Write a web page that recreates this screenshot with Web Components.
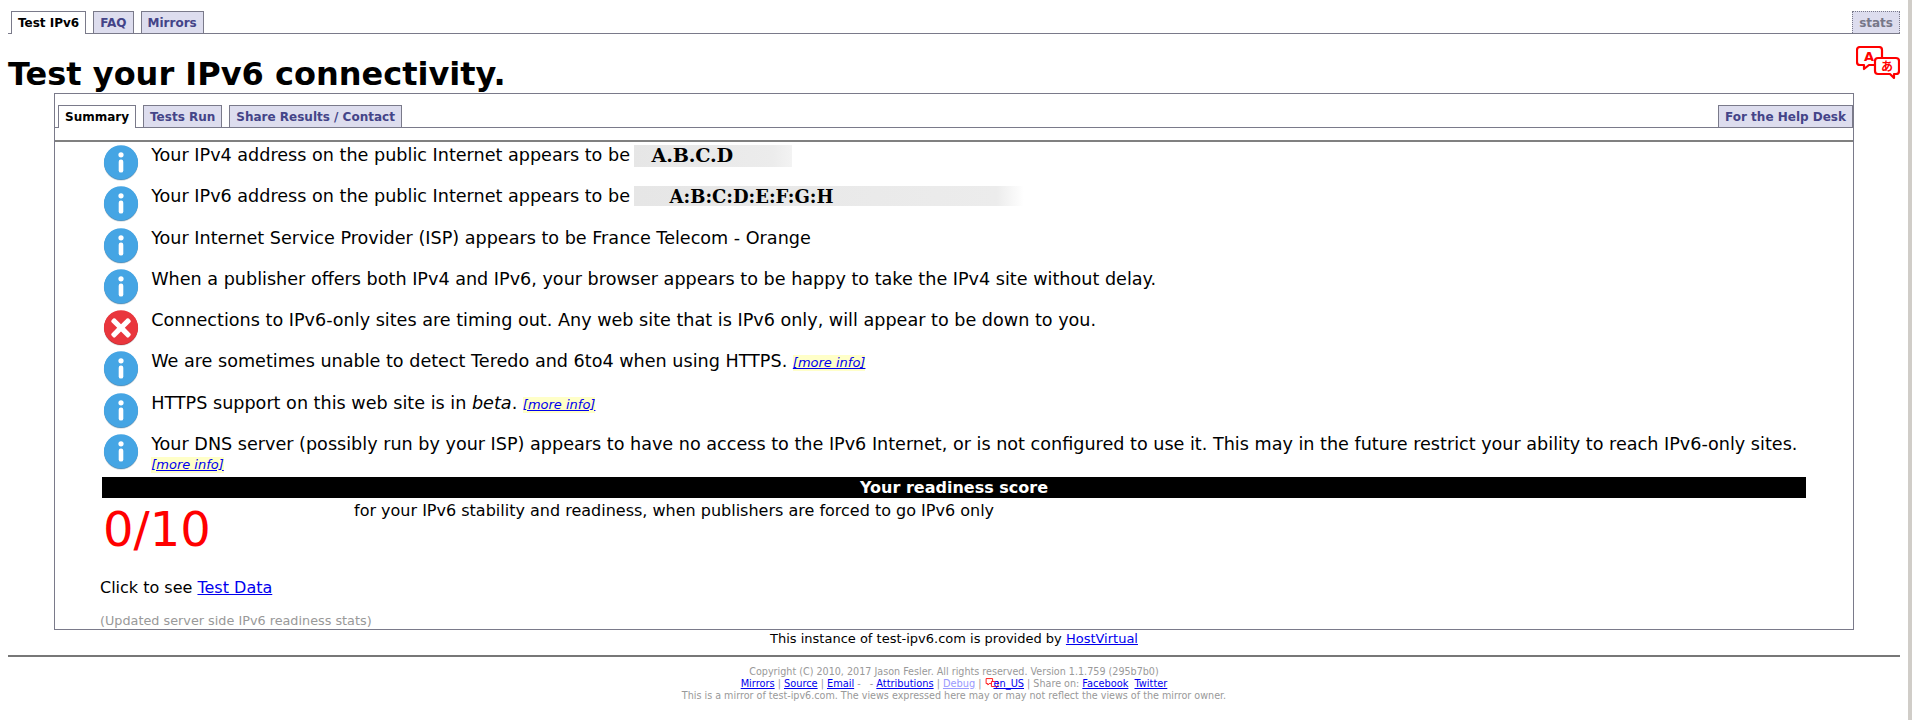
<!DOCTYPE html>
<html lang="en">
<head>
<meta charset="utf-8">
<title>Test your IPv6 connectivity.</title>
<style>
  html { overflow: hidden; }
  body {
    margin: 0;
    padding: 11px 12px 0 8px;
    font-family: "DejaVu Sans", sans-serif;
    font-size: 16px;
    color: #000;
    background: #fff;
  }
  a { color: #00e; }
</style>
</head>
<body>
<tab-bar>
  <tab-item active>Test IPv6</tab-item>
  <tab-item>FAQ</tab-item>
  <tab-item>Mirrors</tab-item>
  <tab-item slot="end" muted>stats</tab-item>
</tab-bar>

<page-title>Test your IPv6 connectivity.</page-title>

<result-panel>
  <tab-bar slot="tabs" inner>
    <tab-item active>Summary</tab-item>
    <tab-item>Tests Run</tab-item>
    <tab-item>Share Results / Contact</tab-item>
    <tab-item slot="end">For the Help Desk</tab-item>
  </tab-bar>

  <result-row>Your IPv4 address on the public Internet appears to be <masked-value width="158" indent="18" height="22" size="19.2" spacing="-.2" fade="88" end="#f3f3f3">A.B.C.D</masked-value></result-row>
  <result-row>Your IPv6 address on the public Internet appears to be <masked-value width="390" indent="36" height="20" size="18" spacing="0" fade="93" end="#fff">A:B:C:D:E:F:G:H</masked-value></result-row>
  <result-row>Your Internet Service Provider (ISP) appears to be France Telecom - Orange</result-row>
  <result-row>When a publisher offers both IPv4 and IPv6, your browser appears to be happy to take the IPv4 site without delay.</result-row>
  <result-row kind="error">Connections to IPv6-only sites are timing out. Any web site that is IPv6 only, will appear to be down to you.</result-row>
  <result-row>We are sometimes unable to detect Teredo and 6to4 when using HTTPS. <more-info></more-info></result-row>
  <result-row>HTTPS support on this web site is in <i>beta</i>. <more-info></more-info></result-row>
  <result-row>Your DNS server (possibly run by your ISP) appears to have no access to the IPv6 Internet, or is not configured to use it. This may in the future restrict your ability to reach IPv6-only sites. <br><more-info tight></more-info></result-row>

  <score-box score="0/10" label="Your readiness score">for your IPv6 stability and readiness, when publishers are forced to go IPv6 only</score-box>

  <data-links></data-links>
</result-panel>

<provider-line></provider-line>
<site-footer></site-footer>
<fake-scrollbar></fake-scrollbar>

<script>
function defineElement(name, html, extra) {
  class Base extends HTMLElement {
    constructor() {
      super();
      this.attachShadow({ mode: 'open' });
      this.shadowRoot.innerHTML = html;
    }
  }
  customElements.define(name, extra ? extra(Base) : Base);
}

const LANG_ICON = `
  <svg width="44" height="34" viewBox="0 0 44 34" fill="#fff" stroke="#f00" stroke-width="2.2" stroke-linejoin="round">
    <path d="M4 1h19q3 0 3 3v12q0 3-3 3H13l-5 4v-4H4q-3 0-3-3V4q0-3 3-3z" fill="none"/>
    <path d="M22 12h18q3 0 3 3v10q0 3-3 3h-2v4l-4-4H22q-3 0-3-3V15q0-3 3-3z"/>
    <text x="13" y="14.5" font-family="DejaVu Sans" font-size="13" font-weight="bold" fill="#f00" stroke="none" text-anchor="middle">A</text>
    <text x="31" y="25" font-family="Noto Sans CJK JP" font-size="12" font-weight="bold" fill="#f00" stroke="none" text-anchor="middle">あ</text>
  </svg>`;

defineElement('tab-bar', `
  <style>
    :host { display: flex; justify-content: space-between; align-items: flex-end; height: 22px; border-bottom: 1px solid #7a7a8a; padding-left: 3px; }
    .group { display: flex; gap: 7px; height: 22px; }
  </style>
  <div class="group"><slot></slot></div>
  <div class="group"><slot name="end"></slot></div>
`);

defineElement('tab-item', `
  <style>
    :host { display: block; box-sizing: border-box; height: 22px; padding: 4px 6px 0; font: bold 12px "DejaVu Sans", sans-serif; color: #448; background: #dde; border: 1px solid #7a7a8a; border-bottom: 0; white-space: nowrap; }
    :host([active]) { color: #000; background: #fff; height: 23px; position: relative; z-index: 1; }
    :host([muted]) { color: #778; border-style: dotted; }
  </style>
  <slot></slot>
`);

defineElement('page-title', `
  <style>
    :host { display: flex; justify-content: space-between; align-items: flex-start; }
    h1 { margin: 0; font: bold 32px/38px "DejaVu Sans", sans-serif; padding-top: 21px; }
    .lang { margin-top: 12px; height: 34px; }
  </style>
  <h1><slot></slot></h1>
  <div class="lang">${LANG_ICON}</div>
`);

defineElement('result-panel', `
  <style>
    :host { display: block; box-sizing: border-box; margin: 0 0 0 46px; width: 1800px; height: 537px; border: 1px solid #7a7a8a; padding-top: 11px; }
    .gap { height: 12px; border-bottom: 2px solid #808080; }
    .body { padding-top: 3px; }
  </style>
  <slot name="tabs"></slot>
  <div class="gap"></div>
  <div class="body"><slot></slot></div>
`);

defineElement('status-icon', `
  <style>
    :host { display: block; width: 36px; height: 36px; }
    svg { display: block; }
  </style>
  <svg width="36" height="36" viewBox="0 0 36 36">
    <ellipse cx="18" cy="18.6" rx="17.2" ry="17.2" fill="#d8dde0"/>
    <circle class="rim" cx="18" cy="18" r="17" fill="#4a90c0"/>
    <circle class="face" cx="18" cy="17.3" r="17" fill="#45a5e4"/>
    <g class="mark" fill="#fff"><circle cx="18" cy="9.8" r="2.6"/><rect x="15.7" y="14.6" width="4.6" height="13" rx="2.2"/></g>
  </svg>
`, Base => class extends Base {
  static get observedAttributes() { return ['kind']; }
  attributeChangedCallback(name, oldValue, value) {
    if (value !== 'error') return;
    this.shadowRoot.querySelector('.rim').setAttribute('fill', '#c02a30');
    this.shadowRoot.querySelector('.face').setAttribute('fill', '#e9363d');
    this.shadowRoot.querySelector('.mark').innerHTML = '<path d="M12.2 8.6 18 14.2l5.8-5.6q1-.9 2 0l1.6 1.6q.9 1 0 2l-5.6 5.6 5.6 5.8q.9 1 0 2l-1.6 1.6q-1 .9-2 0L18 21.6l-5.8 5.6q-1 .9-2 0l-1.6-1.6q-.9-1 0-2l5.6-5.8-5.6-5.6q-.9-1 0-2l1.6-1.6q1-.9 2 0z"/>';
  }
});

defineElement('result-row', `
  <style>
    :host { display: grid; grid-template-columns: 48.6px 1fr; margin-left: 47.6px; height: 41.3px; font-size: 17.6px; line-height: 21px; }
    .text { white-space: nowrap; }
  </style>
  <status-icon></status-icon>
  <div class="text"><slot></slot></div>
`, Base => class extends Base {
  connectedCallback() {
    if (this.hasAttribute('kind')) {
      this.shadowRoot.querySelector('status-icon').setAttribute('kind', this.getAttribute('kind'));
    }
  }
});

defineElement('masked-value', `
  <style>
    :host { display: inline-block; box-sizing: border-box; vertical-align: top; margin-left: -2px; font-family: "DejaVu Serif", serif; font-weight: bold; line-height: 21px; }
  </style>
  <slot></slot>
`, Base => class extends Base {
  connectedCallback() {
    this.style.width = this.getAttribute('width') + 'px';
    this.style.height = this.getAttribute('height') + 'px';
    this.style.paddingLeft = this.getAttribute('indent') + 'px';
    this.style.fontSize = this.getAttribute('size') + 'px';
    this.style.letterSpacing = this.getAttribute('spacing') + 'px';
    this.style.background = 'linear-gradient(90deg, #e6e6e6 0%, #ececec ' + this.getAttribute('fade') + '%, ' + this.getAttribute('end') + ' 100%)';
  }
});

defineElement('more-info', `
  <style>
    :host { display: inline-block; font: italic 13px/16px "DejaVu Sans", sans-serif; background: #ffffc8; }
    :host([tight]) { vertical-align: 2.5px; }
    a { color: #00e; }
  </style>
  <a href="#">[more info]</a>
`);

defineElement('score-box', `
  <style>
    :host { display: block; margin: 2px 47px 0 47px; }
    .title { background: #000; color: #fff; text-align: center; font: bold 16px/21px "DejaVu Sans", sans-serif; }
    .line { display: grid; grid-template-columns: 252px 1fr; height: 72px; }
    .score { color: #f00; font: 48px/56px "DejaVu Sans", sans-serif; padding: 3px 0 0 1px; }
    .about { font-size: 16px; line-height: 19px; padding-top: 3px; }
  </style>
  <div class="title"></div>
  <div class="line">
    <div class="score"></div>
    <div class="about"><slot></slot></div>
  </div>
`, Base => class extends Base {
  connectedCallback() {
    this.shadowRoot.querySelector('.title').textContent = this.getAttribute('label');
    this.shadowRoot.querySelector('.score').textContent = this.getAttribute('score');
  }
});

defineElement('data-links', `
  <style>
    :host { display: block; margin: 8px 0 0 45px; }
    a { color: #00e; }
    .click { line-height: 19px; }
    .stats { margin-top: 16px; color: #999; font-size: 12.8px; line-height: 16px; }
  </style>
  <div class="click">Click to see <a href="#">Test Data</a></div>
  <div class="stats">(Updated server side IPv6 readiness stats)</div>
`);

defineElement('provider-line', `
  <style>
    :host { display: block; padding-top: 1px; text-align: center; font-size: 13px; line-height: 16px; }
    a { color: #00e; }
  </style>
  This instance of test-ipv6.com is provided by <a href="#">HostVirtual</a>
`);

defineElement('site-footer', `
  <style>
    :host { display: block; margin-top: 8px; border-top: 2px solid #777; padding-top: 9px; text-align: center; font-size: 9.6px; line-height: 12px; color: #999; }
    a { color: #00e; font-size: 9.8px; }
    a.dim { color: #99f; }
    svg { vertical-align: top; margin-right: -5px; }
  </style>
  <div>Copyright (C) 2010, 2017 Jason Fesler. All rights reserved. Version 1.1.759 (295b7b0)</div>
  <div><a href="#">Mirrors</a> | <a href="#">Source</a> | <a href="#">Email</a> - &nbsp; - <a href="#">Attributions</a> | <a class="dim" href="#">Debug</a> | <svg width="14" height="10" viewBox="0 0 44 34" fill="#fff" stroke="#f00" stroke-width="3"><path d="M2 2h22v17H12l-4 5v-5H2z"/><path d="M20 12h22v17h-4v4l-5-4H20z"/></svg><a href="#">en_US</a> | Share on: <a href="#">Facebook</a> &nbsp;<a href="#">Twitter</a></div>
  <div>This is a mirror of test-ipv6.com. The views expressed here may or may not reflect the views of the mirror owner.</div>
`);

defineElement('fake-scrollbar', `
  <style>
    :host { position: fixed; top: 0; right: 0; bottom: 0; width: 4px; background: #d0cdc8; }
  </style>
`);
</script>
</body>
</html>
